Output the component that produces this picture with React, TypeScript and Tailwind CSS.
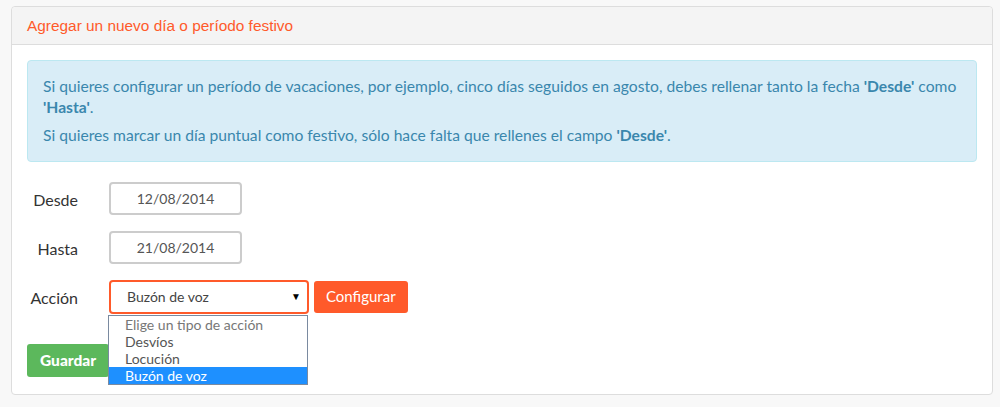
const options = ['Elige un tipo de acción', 'Desvíos', 'Locución', 'Buzón de voz'];

function DateField({ label, value }: { label: string; value: string }) {
    return (
        <div className="flex items-center h-[32px]">
            <label className="w-[51px] pt-[4px] text-right text-[16px] text-[#333]">{label}</label>
            <div className="ml-[31px] w-[133px] h-[33px] border-2 border-[#ccc] rounded-[4px] flex items-center justify-center text-[14px] text-[#555]">
                {value}
            </div>
        </div>
    );
}

export default function App() {
    return (
        <div className="w-[1000px] h-[407px] bg-[#f8f8f8] pt-[6px] pl-[11px]" style={{ fontFamily: 'Lato, "Open Sans", sans-serif' }}>
            <div className="w-[982px] h-[389px] bg-white border border-[#ddd] rounded-[4px]">
                <div className="h-[38px] bg-[#f4f4f4] border-b border-[#ddd] rounded-t-[4px] pl-[15px] flex items-center">
                    <h3 className="text-[15.4px] text-[#ff5a2a]" style={{ fontFamily: '"Liberation Sans", Arial, sans-serif' }}>
                        Agregar un nuevo día o período festivo
                    </h3>
                </div>
                <div className="px-[15px] pt-[15px]">
                    <div className="bg-[#d9edf7] border border-[#bce8f1] rounded-[4px] px-[15px] py-[15px] text-[15.65px] leading-[21px] text-[#3a87ad]">
                        <p className="mb-[7px]">
                            Si quieres configurar un período de vacaciones, por ejemplo, cinco días seguidos en agosto, debes rellenar tanto la fecha <b>'Desde'</b> como <b>'Hasta'</b>.
                        </p>
                        <p>
                            Si quieres marcar un día puntual como festivo, sólo hace falta que rellenes el campo <b>'Desde'</b>.
                        </p>
                    </div>
                    <div className="mt-[20px] flex flex-col gap-[17px]">
                        <DateField label="Desde" value="12/08/2014" />
                        <DateField label="Hasta" value="21/08/2014" />
                        <div className="relative flex items-center h-[33px]">
                            <label className="w-[51px] pt-[2px] text-right text-[16px] text-[#333]">Acción</label>
                            <div className="ml-[31px] w-[200px] h-[34px] border-2 border-[#ff5a2a] rounded-[4px] flex items-center pl-[16px] pr-[6px] text-[14px] text-[#444]">
                                <span className="flex-1">Buzón de voz</span>
                                <span className="text-[10px] text-black">▼</span>
                            </div>
                            <button className="ml-[5px] h-[32px] px-[12px] bg-[#ff5a2a] rounded-[3px] text-white text-[15px]">Configurar</button>
                            <ul className="absolute left-[81px] top-[35px] w-[200px] bg-white border border-[#7a8aa0] text-[14px] leading-[17px] text-[#555] z-10">
                                {options.map((o, i) => (
                                    <li
                                        key={o}
                                        className={
                                            i === options.length - 1
                                                ? 'pl-[16px] bg-[#1e90ff] text-white'
                                                : i === 0
                                                ? 'pl-[16px] text-[#777]'
                                                : 'pl-[16px]'
                                        }
                                    >
                                        {o}
                                    </li>
                                ))}
                            </ul>
                        </div>
                        <div className="mt-[14px]">
                            <button className="h-[33px] px-[13px] bg-[#5cb85c] rounded-[3px] text-white text-[15.5px] font-black">Guardar</button>
                        </div>
                    </div>
                </div>
            </div>
        </div>
    );
}
